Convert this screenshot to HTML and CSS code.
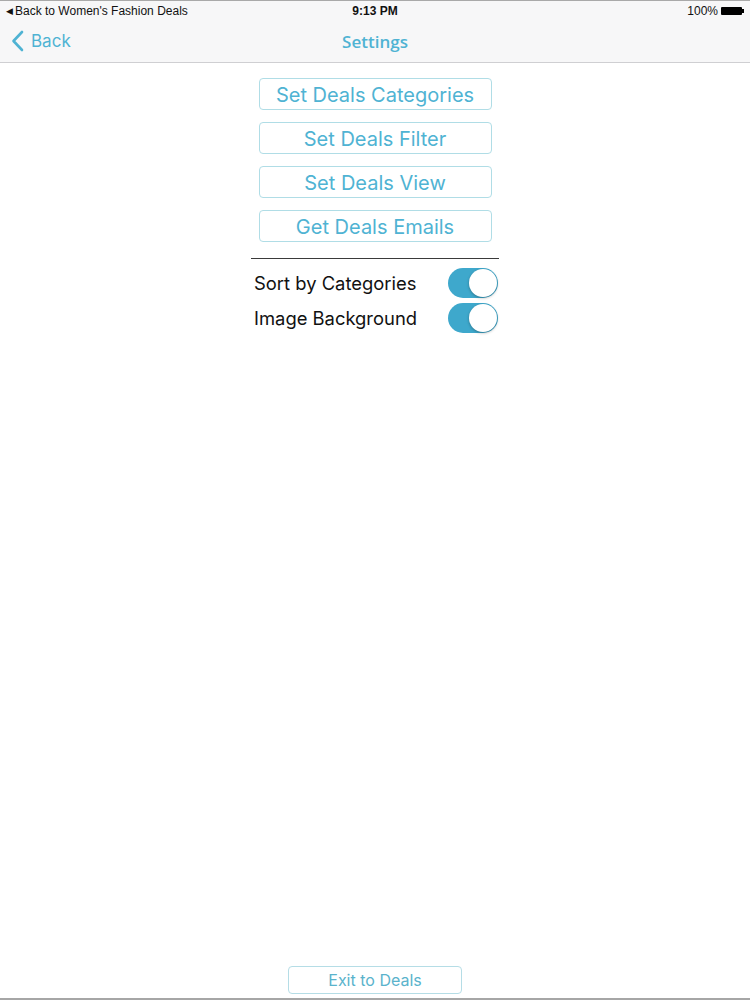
FILE: index.html
```html
<!DOCTYPE html>
<html>
<head>
<meta charset="utf-8">
<link rel="stylesheet" href="styles.css">
</head>
<body>
<div class="screen">
  <div class="status">
    <div class="status-left"><span class="tri">&#9664;</span>Back to Women's Fashion Deals</div>
    <div class="status-center">9:13 PM</div>
    <div class="status-right">100%<span class="battery"><span class="batt-body"></span><span class="batt-tip"></span></span></div>
  </div>
  <div class="nav">
    <div class="back">
      <svg class="chev" width="13" height="22" viewBox="0 0 13 22"><path d="M11 2 L2.5 11 L11 20" fill="none" stroke="#4fb3d3" stroke-width="2.6" stroke-linecap="round" stroke-linejoin="round"/></svg>
      <span>Back</span>
    </div>
    <div class="title">Settings</div>
  </div>
  <div class="content">
    <div class="buttons">
      <div class="btn">Set Deals Categories</div>
      <div class="btn">Set Deals Filter</div>
      <div class="btn">Set Deals View</div>
      <div class="btn">Get Deals Emails</div>
    </div>
    <div class="divider"></div>
    <div class="rows">
      <div class="row"><span class="label">Sort by Categories</span><span class="toggle"><span class="knob"></span></span></div>
      <div class="row"><span class="label">Image Background</span><span class="toggle"><span class="knob"></span></span></div>
    </div>
  </div>
  <div class="footer">
    <div class="exit">Exit to Deals</div>
  </div>
</div>
</body>
</html>
```
FILE: styles.css
```css
html, body { margin: 0; padding: 0; }
body { width: 750px; height: 1000px; background: #fff; font-family: Inter, "Liberation Sans", Arial, sans-serif; overflow: hidden; }
.screen { width: 750px; height: 1000px; display: flex; flex-direction: column; border-top: 1px solid #a9a9a9; border-bottom: 2px solid #a6a6a6; box-sizing: border-box; }
.status { height: 19px; background: #f7f7f8; display: flex; align-items: center; position: relative; font-family: "Liberation Sans", Arial, sans-serif; font-size: 12px; color: #111; }
.status-left { padding-left: 6px; display: flex; align-items: center; }
.tri { font-size: 9px; margin-right: 2px; }
.status-center { position: absolute; left: 0; right: 0; text-align: center; font-weight: bold; pointer-events: none; }
.status-right { margin-left: auto; padding-right: 6px; display: flex; align-items: center; z-index: 1; }
.battery { display: inline-flex; align-items: center; margin-left: 3px; }
.batt-body { width: 21px; height: 8px; background: #000; border-radius: 1px; }
.batt-tip { width: 2px; height: 4px; background: #000; }
.nav { height: 42px; background: #f7f7f8; border-bottom: 1px solid #cfcfd2; display: flex; align-items: center; position: relative; }
.back { display: flex; align-items: center; padding-left: 11px; color: #4fb3d3; font-size: 17px; font-family: Inter, "Liberation Sans", Arial, sans-serif; }
.chev { margin-right: 7px; }
.title { position: absolute; left: 0; right: 0; text-align: center; color: #4fb3d3; font-size: 17px; font-weight: 600; font-family: "Open Sans", "Liberation Sans", sans-serif; pointer-events: none; }
.content { display: flex; flex-direction: column; align-items: center; padding-top: 15px; flex: 1; }
.buttons { display: flex; flex-direction: column; gap: 12px; }
.btn { width: 233px; height: 32px; box-sizing: border-box; padding-top: 2px; border: 1px solid #b0dde6; border-radius: 4px; color: #4fb3d3; font-size: 20px; display: flex; align-items: center; justify-content: center; font-family: Inter, "Liberation Sans", sans-serif; }
.divider { width: 248px; height: 1px; background: #3a3a3a; margin-top: 16px; margin-left: 0; }
.rows { width: 244px; margin-left: 2px; padding-top: 9px; display: flex; flex-direction: column; gap: 5px; }
.row { display: flex; align-items: center; justify-content: space-between; height: 30px; }
.label { font-size: 18.4px; color: #111; font-family: Inter, "Liberation Sans", sans-serif; }
.toggle { width: 50px; height: 30px; border-radius: 15px; background: #3ea8cc; position: relative; }
.knob { position: absolute; right: 1px; top: 1px; width: 28px; height: 28px; border-radius: 50%; background: #fff; box-shadow: 0 1px 3px rgba(0,0,0,0.3); }
.footer { display: flex; justify-content: center; padding-bottom: 4px; }
.exit { width: 174px; height: 28px; box-sizing: border-box; border: 1px solid #b5dde6; border-radius: 4px; color: #5ab3cc; font-size: 16px; display: flex; align-items: center; justify-content: center; font-family: Inter, "Liberation Sans", sans-serif; }
```
